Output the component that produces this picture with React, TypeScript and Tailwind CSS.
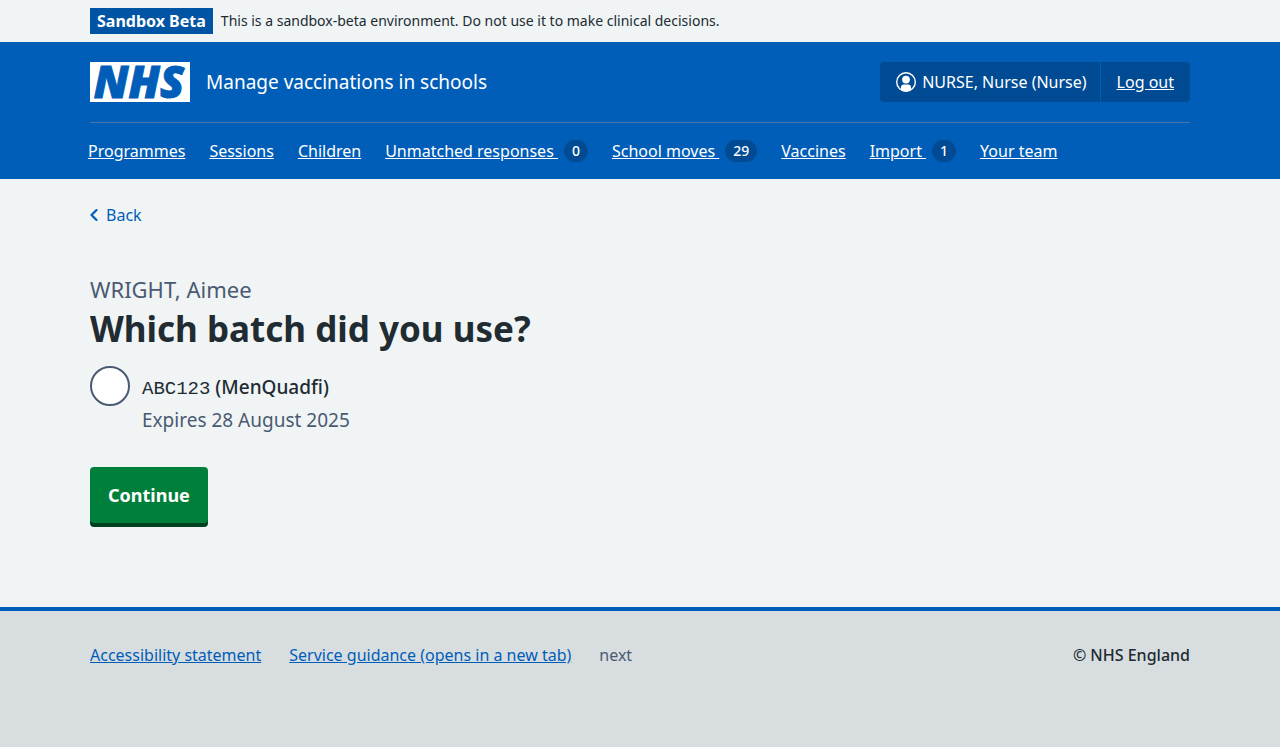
const navItems: { label: string; count?: number }[] = [
  { label: 'Programmes' },
  { label: 'Sessions' },
  { label: 'Children' },
  { label: 'Unmatched responses', count: 0 },
  { label: 'School moves', count: 29 },
  { label: 'Vaccines' },
  { label: 'Import', count: 1 },
  { label: 'Your team' },
];

function EnvironmentBanner() {
  return (
    <div className="py-2">
      <div className="mx-auto flex max-w-[1100px] items-center gap-2">
        <strong className="bg-[#0054a4] px-[7px] text-[16px] leading-[26px] font-bold text-white">
          Sandbox Beta
        </strong>
        <span className="text-[14px] leading-[26px]">
          This is a sandbox-beta environment. Do not use it to make clinical decisions.
        </span>
      </div>
    </div>
  );
}

function UserIcon() {
  return (
    <svg className="size-5" viewBox="0 0 20 20" aria-hidden="true">
      <circle cx="10" cy="10" r="9.3" fill="none" stroke="#fff" strokeWidth="1.4" />
      <circle cx="10" cy="7.6" r="3.9" fill="#fff" />
      <path d="M5 18V15.2A2.8 2.8 0 0 1 7.8 12.4H12.2A2.8 2.8 0 0 1 15 15.2V18A9.3 9.3 0 0 1 5 18Z" fill="#fff" />
    </svg>
  );
}

function Header() {
  return (
    <header className="bg-[#005eb8] text-white">
      <div className="mx-auto max-w-[1100px]">
        <div className="flex items-center justify-between border-b border-[#4c74a6] py-5">
          <a href="#home" className="flex items-center gap-4">
            <span className="flex h-10 w-[100px] items-center justify-center bg-white pr-[2px] pb-[3px] text-[44px] leading-[36px] font-black text-[#005eb8] italic [-webkit-text-stroke:1px_#005eb8]">
              NHS
            </span>
            <span className="text-[19px] leading-7">Manage vaccinations in schools</span>
          </a>
          <div className="flex rounded bg-[#004b93] text-[16px] leading-6">
            <span className="flex items-center gap-[6px] border-r border-[#005eb8] py-2 pr-[13px] pl-4">
              <UserIcon />
              NURSE, Nurse (Nurse)
            </span>
            <a href="#logout" className="px-4 py-2 underline">
              Log out
            </a>
          </div>
        </div>
        <nav aria-label="Menu" className="-mx-[2px]">
          <ul className="flex gap-6 text-[16px] leading-6">
            {navItems.map((item) => (
              <li key={item.label} className="py-4">
                <a href="#section" className="flex items-center gap-[6px]">
                  <span className="whitespace-pre underline">
                    {item.count === undefined ? item.label : `${item.label} `}
                  </span>
                  {item.count !== undefined && (
                    <span className="rounded-full bg-[#004b93] px-2 text-[14px] leading-[22px] font-medium">
                      {item.count}
                    </span>
                  )}
                </a>
              </li>
            ))}
          </ul>
        </nav>
      </div>
    </header>
  );
}

export default function App() {
  return (
    <div className="flex min-h-screen flex-col bg-[#f0f4f5] font-['Noto_Sans','Open_Sans',sans-serif] text-[#212b32]">
      <EnvironmentBanner />
      <Header />
      <div className="mx-auto w-full max-w-[1100px] pt-6 pb-20">
        <a href="#back" className="inline-flex items-center gap-2 text-[16px] leading-6 text-[#005eb8]">
          <svg className="h-3 w-2" viewBox="0 0 8 12" fill="none" stroke="currentColor" strokeWidth="2.2" aria-hidden="true">
            <path d="M6.5 1L1.5 6L6.5 11" strokeLinecap="round" strokeLinejoin="round" />
          </svg>
          Back
        </a>
        <main className="pt-[45px]">
          <form>
            <fieldset>
              <legend className="mb-[14px]">
                <span className="block text-[22px] leading-[34px] text-[#4a5a72]">WRIGHT, Aimee</span>
                <h1 className="text-[35px] leading-[46px] font-bold">Which batch did you use?</h1>
              </legend>
              <div className="flex gap-3">
                <input
                  type="radio"
                  id="batch"
                  name="batch"
                  aria-describedby="batch-hint"
                  className="size-10 shrink-0 appearance-none rounded-full border-2 border-[#4a5a72] bg-white checked:bg-[radial-gradient(#212b32_10px,white_11px)]"
                />
                <div className="pt-[7px] text-[19px]">
                  <label htmlFor="batch" className="block leading-7 font-medium">
                    <span className="font-['Liberation_Mono',monospace] font-normal">ABC123</span> (MenQuadfi)
                  </label>
                  <div id="batch-hint" className="pt-[3px] leading-7 text-[#4a5a72]">
                    Expires 28 August 2025
                  </div>
                </div>
              </div>
            </fieldset>
            <button
              type="button"
              className="mt-[33px] mb-1 rounded bg-[#007f3b] px-[18px] py-[14px] text-[18px] leading-7 font-bold text-white shadow-[0_4px_0_#00401e]"
            >
              Continue
            </button>
          </form>
        </main>
      </div>
      <footer className="grow border-t-4 border-[#005eb8] bg-[#d8dde0]">
        <div className="mx-auto flex max-w-[1100px] justify-between pt-8 text-[16px] leading-6">
          <ul className="flex gap-7">
            <li>
              <a href="#accessibility" className="text-[#005eb8] underline">Accessibility statement</a>
            </li>
            <li>
              <a href="#guidance" className="text-[#005eb8] underline">Service guidance (opens in a new tab)</a>
            </li>
            <li className="text-[#4a5a72]">next</li>
          </ul>
          <p className="font-medium">© NHS England</p>
        </div>
      </footer>
    </div>
  );
}
